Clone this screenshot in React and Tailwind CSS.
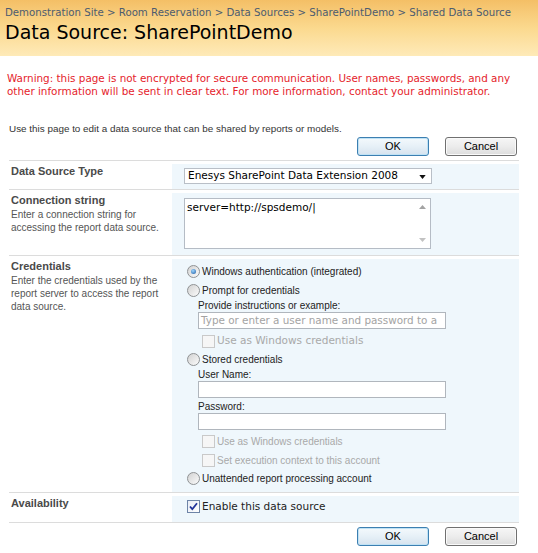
import React from "react";

const VER = "font-['DejaVu_Sans',Verdana,sans-serif]";
const SEG = "font-['Liberation_Sans',Arial,sans-serif]";

function Radio({ checked }) {
  return (
    <span className="relative inline-block w-[13px] h-[13px] rounded-full border border-[#8f9294] bg-linear-to-br from-[#d2d2d2] to-[#fbfbfb] shrink-0">
      {checked && (
        <span className="absolute left-[3px] top-[3px] w-[5px] h-[5px] rounded-full bg-[radial-gradient(circle_at_40%_35%,#9cd6ff,#1c5aa3)]" />
      )}
    </span>
  );
}

function Check({ checked }) {
  if (checked) {
    return (
      <span className="relative inline-block w-[13px] h-[13px] border border-[#6e84a7] bg-linear-to-br from-[#e8ecf5] to-white shrink-0">
        <svg viewBox="0 0 13 13" className="absolute -left-px -top-px w-[13px] h-[13px]">
          <path d="M3 6.5 L5.3 9.2 L10 3.3" fill="none" stroke="#22349a" strokeWidth="1.8" />
        </svg>
      </span>
    );
  }
  return <span className="inline-block w-[13px] h-[13px] border border-[#c9c9c9] bg-[#f6f6f6] shrink-0" />;
}

function Button({ children, focused }) {
  return (
    <div
      className={
        focused
          ? `w-[72px] h-[19px] rounded-[3px] border border-[#3c7fb1] bg-linear-to-b from-[#f4f9fc] via-[#e6f0f7] to-[#d6e3ee] shadow-[inset_0_0_0_1px_#bfe2f5] flex items-center justify-center text-[11px] text-black ${SEG}`
          : `w-[72px] h-[19px] rounded-[3px] border border-[#707070] bg-linear-to-b from-[#f6f6f6] via-[#ececec] to-[#dcdcdc] shadow-[inset_0_0_0_1px_#fafafa] flex items-center justify-center text-[11px] text-black ${SEG}`
      }
    >
      {children}
    </div>
  );
}

function Buttons() {
  return (
    <div className="flex justify-end gap-[16px] pr-[21px]">
      <Button focused>OK</Button>
      <Button>Cancel</Button>
    </div>
  );
}

function Row({ label, desc, children, className }) {
  return (
    <div className={`flex border-t border-[#dcdcdc] ${className}`}>
      <div className={`w-[163px] shrink-0 pl-[2px] ${SEG}`}>
        <div className="text-[11px] leading-[14px] font-bold text-[#4a4a4a]">{label}</div>
        {desc && <div className="text-[10px] leading-[13px] text-[#555] mt-[1px] whitespace-nowrap">{desc}</div>}
      </div>
      <div className="flex-1 bg-[#eff7fc]">{children}</div>
    </div>
  );
}

export default function App() {
  return (
    <div className="w-[538px] h-[553px] bg-white overflow-hidden">
      <div className="h-[56px] bg-linear-to-b from-[#f4bf66] via-[#fbd98e] to-[#feeab8] px-[5px] pt-[6px]">
        <div className={`text-[10.2px] leading-[14px] text-[#4c5c70] whitespace-nowrap ${VER}`}>
          Demonstration Site &gt; Room Reservation &gt; Data Sources &gt; SharePointDemo &gt; Shared Data Source
        </div>
        <div className={`text-[19px] leading-[24px] text-black whitespace-nowrap ${VER}`}>Data Source: SharePointDemo</div>
      </div>

      <div className={`mt-[16px] px-[7px] text-[10.4px] leading-[13px] text-[#e5232b] whitespace-nowrap ${VER}`}>
        Warning: this page is not encrypted for secure communication. User names, passwords, and any<br />
        other information will be sent in clear text. For more information, contact your administrator.
      </div>

      <div className={`mt-[24px] px-[9px] text-[9.9px] leading-[13px] text-[#333] ${SEG}`}>
        Use this page to edit a data source that can be shared by reports or models.
      </div>

      <div className="mt-[2px]">
        <Buttons />
      </div>

      <div className="mt-[4px] ml-[9px] w-[510px] border-b border-[#dcdcdc]">
        <Row label="Data Source Type" className="h-[29px] pt-[3px]">
          <div className="pt-[4px] pl-[12px]">
            <div className={`relative w-[248px] h-[16px] bg-white border border-[#b9bfc7] flex items-center pl-[3px] text-[10.5px] text-black whitespace-nowrap ${VER}`}>
              Enesys SharePoint Data Extension 2008
              <svg viewBox="0 0 8 5" className="absolute right-[5px] top-[6px] w-[7px] h-[4px]">
                <path d="M0 0 L8 0 L4 5 Z" fill="#111" />
              </svg>
            </div>
          </div>
        </Row>
        <Row
          label="Connection string"
          desc={<>Enter a connection string for<br />accessing the report data source.</>}
          className="h-[66px] pt-[3px]"
        >
          <div className="pt-[5px] pl-[12px]">
            <div className={`relative w-[247px] h-[51px] bg-white border border-[#b5bcc5] pl-[2px] pt-[1px] text-[10.5px] leading-[14px] text-black ${VER}`}>
              server=http://spsdemo/<span className="font-normal">|</span>
              <div className="absolute right-0 top-0 bottom-0 w-[16px] flex flex-col items-center justify-between py-[6px]">
                <svg viewBox="0 0 7 4" className="w-[7px] h-[4px]"><path d="M0 4 L3.5 0 L7 4 Z" fill="#a3a3a3" /></svg>
                <svg viewBox="0 0 7 4" className="w-[7px] h-[4px]"><path d="M0 0 L3.5 4 L7 0 Z" fill="#c2c2c2" /></svg>
              </div>
            </div>
          </div>
        </Row>
        <Row
          label="Credentials"
          desc={<>Enter the credentials used by the<br />report server to access the report<br />data source.</>}
          className="h-[237px] pt-[3px]"
        >
          <div className={`pl-[15px] pt-[4px] flex flex-col text-[10px] text-[#222] ${SEG}`}>
            <div className="h-[16px] flex items-center gap-[2px]"><Radio checked /><span>Windows authentication (integrated)</span></div>
            <div className="h-[16px] mt-[3px] flex items-center gap-[2px]"><Radio /><span>Prompt for credentials</span></div>
            <div className="ml-[11px] flex flex-col">
              <div className="h-[13px] mt-[1px] leading-[13px]">Provide instructions or example:</div>
              <div className={`w-[248px] h-[17px] border border-[#b0b6bd] bg-white flex items-center pl-[2px] text-[10.4px] text-[#a3a3a3] whitespace-nowrap overflow-hidden ${VER}`}>
                Type or enter a user name and password to a
              </div>
              <div className={`h-[16px] mt-[4px] ml-[4px] flex items-center gap-[2px] text-[10.5px] text-[#a9a9a9] ${VER}`}><Check /><span>Use as Windows credentials</span></div>
            </div>
            <div className="h-[16px] mt-[2px] flex items-center gap-[2px]"><Radio /><span>Stored credentials</span></div>
            <div className="ml-[11px] flex flex-col">
              <div className="h-[13px] mt-[1px] leading-[13px]">User Name:</div>
              <div className="w-[248px] h-[17px] border border-[#b0b6bd] bg-white" />
              <div className="h-[13px] mt-[2px] leading-[13px]">Password:</div>
              <div className="w-[248px] h-[17px] border border-[#b0b6bd] bg-white" />
              <div className="h-[16px] mt-[3px] ml-[4px] flex items-center gap-[2px] text-[#a9a9a9]"><Check /><span>Use as Windows credentials</span></div>
              <div className="h-[16px] mt-[3px] ml-[4px] flex items-center gap-[2px] text-[#a9a9a9]"><Check /><span>Set execution context to this account</span></div>
            </div>
            <div className="h-[16px] mt-[2px] flex items-center gap-[2px]"><Radio /><span>Unattended report processing account</span></div>
          </div>
        </Row>
        <Row label="Availability" className="h-[30px] pt-[3px]">
          <div className={`pl-[15px] pt-[5px] h-[16px] flex items-center gap-[2px] text-[10.5px] text-[#222] ${VER}`}>
            <Check checked /><span>Enable this data source</span>
          </div>
        </Row>
      </div>

      <div className="mt-[4px]">
        <Buttons />
      </div>
    </div>
  );
}
